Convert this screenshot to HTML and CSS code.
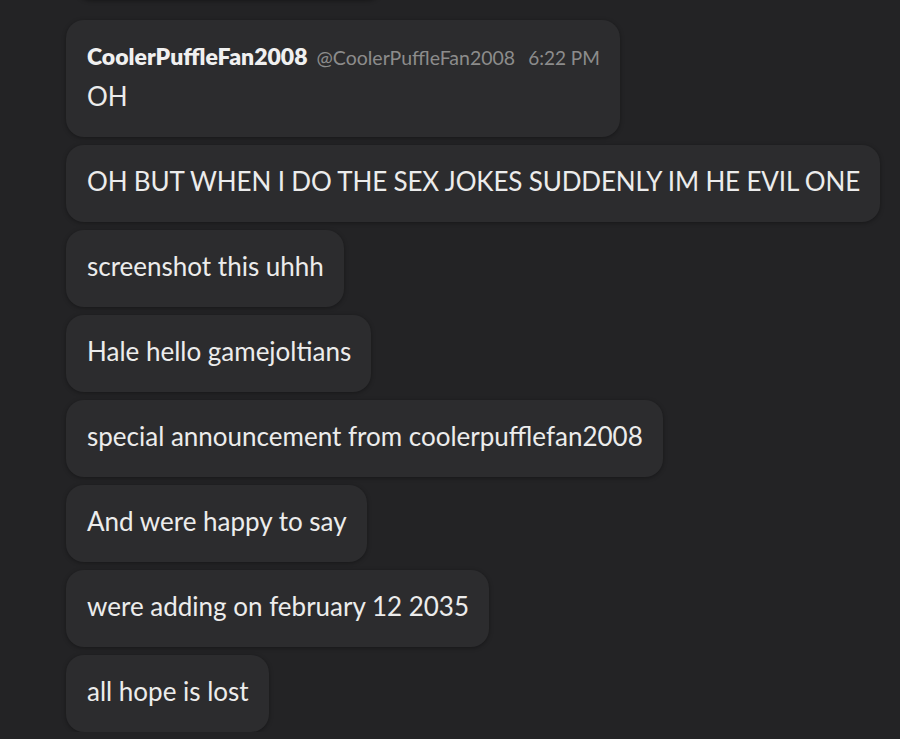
FILE: index.html
```html
<!DOCTYPE html>
<html>
<head>
<meta name="viewport" content="width=device-width, initial-scale=1">
<link rel="stylesheet" href="styles.css">
</head>
<body>

<div class="chat">
  <!-- tail of the previous group, scrolled mostly out of view -->
  <div class="group">
    <div class="avatar"></div>
    <div class="stack">
      <div class="bubble prev">&nbsp;</div>
    </div>
  </div>

  <div class="group">
    <div class="gutter"></div>
    <div class="stack">
      <div class="bubble">
        <div class="meta">
          <span class="name">CoolerPuffleFan2008</span>
          <span class="handle">@CoolerPuffleFan2008</span>
          <span class="time">6:22 PM</span>
        </div>
        <div class="text">OH</div>
      </div>
      <div class="bubble"><div class="text caps">OH BUT WHEN I DO THE SEX JOKES SUDDENLY IM HE EVIL ONE</div></div>
      <div class="bubble"><div class="text">screenshot this uhhh</div></div>
      <div class="bubble"><div class="text">Hale hello gamejoltians</div></div>
      <div class="bubble"><div class="text">special announcement from coolerpufflefan2008</div></div>
      <div class="bubble"><div class="text">And were happy to say</div></div>
      <div class="bubble"><div class="text">were adding on february 12 2035</div></div>
      <div class="bubble"><div class="text">all hope is lost</div></div>
    </div>
  </div>
</div>

</body>
</html>
```

FILE: styles.css
```css
* {
  box-sizing: border-box;
}

body {
  margin: 0;
  background-color: #232325;
  color: #ececec;
  font-family: "Lato", "Noto Sans", sans-serif;
  overflow: hidden;
}

/* shift up so only the bottom edge of the previous message shows */
.chat {
  margin-top: -58px;
}

.group {
  display: flex;
}

.gutter {
  width: 66px;
  flex-shrink: 0;
}

.avatar {
  height: 58px;
  width: 22px;
  flex-shrink: 0;
  margin-left: 20px;
  margin-right: 24px;
  border-radius: 50%;
  background: radial-gradient(circle at 40% 90%, #c98a1c 0, #b0501c 60%, #232325 100%);
}

.stack {
  display: flex;
  flex-direction: column;
  align-items: flex-start;
  gap: 8px;
  padding-top: 20px;
}

.group:first-child .stack {
  padding-top: 0;
}

.bubble {
  background-color: #2c2c2e;
  border-radius: 18px;
  padding: 20px 20px 24px 21px;
  box-shadow: 0 1px 4px rgba(0, 0, 0, 0.35);
}

.bubble.prev {
  width: 310px;
  height: 58px;
  margin-left: 8px;
}

.text {
  font-size: 26px;
  line-height: 33px;
}

.text.caps {
  letter-spacing: -0.15px;
}

.meta {
  display: flex;
  align-items: baseline;
  line-height: 32px;
  margin-bottom: 6px;
}

.name {
  font-size: 23px;
  font-weight: 800;
  color: #f0f0f0;
}

.handle,
.time {
  font-size: 19.5px;
  color: #8c8c8c;
}

.handle {
  margin-left: 9px;
}

.time {
  font-size: 19px;
  margin-left: 13px;
}
```
